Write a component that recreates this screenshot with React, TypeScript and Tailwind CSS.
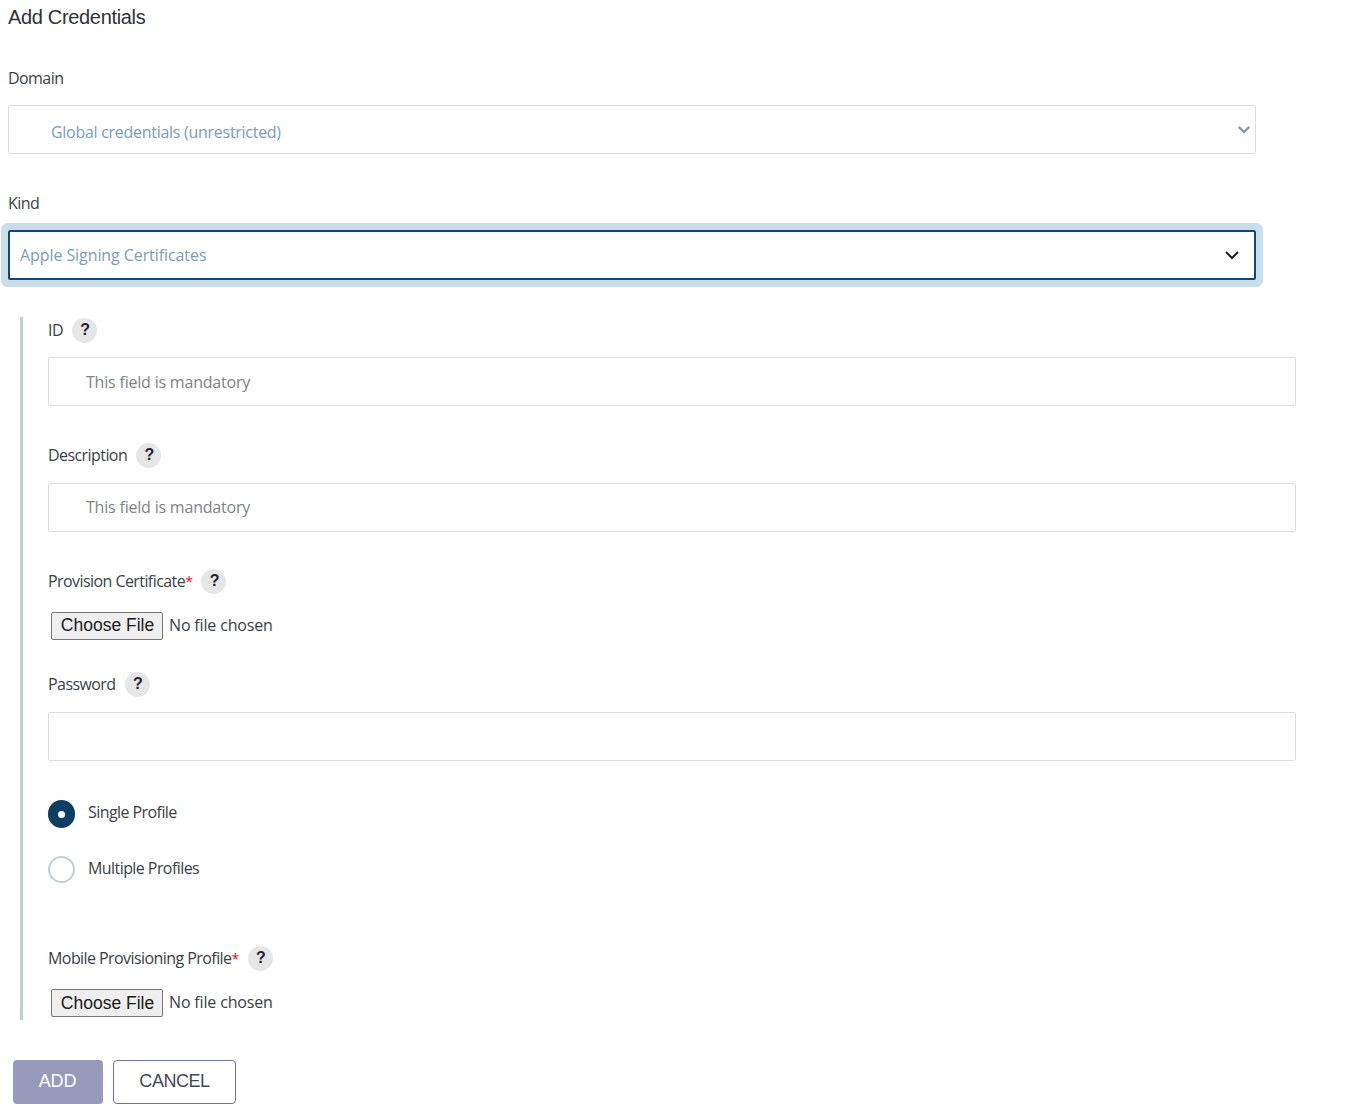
const sans = "font-['Open_Sans','Noto_Sans',sans-serif]";

function Help() {
  return (
    <span className="flex h-[25px] w-[25px] items-center justify-center rounded-full bg-[#e6e6e6] pl-px font-['Liberation_Sans',sans-serif] text-[16px] font-bold text-[#1f2430]">
      ?
    </span>
  );
}

function Label({ text, required }: { text: string; required?: boolean }) {
  return (
    <div className="flex h-[26px] items-center text-[16px] tracking-[-0.57px] text-[#3c4046]">
      <span>
        {text}
        {required && <span className="text-[14px] text-[#f01010]">*</span>}
      </span>
      <span className="ml-[9px]">
        <Help />
      </span>
    </div>
  );
}

function Field({ placeholder, lift }: { placeholder?: string; lift?: boolean }) {
  return (
    <div
      className={
        lift
          ? "flex h-[49px] w-[1248px] items-center rounded-[2px] border border-[#dedede] pb-[2px] pl-[37px] text-[16px] tracking-[-0.2px] text-[#808386]"
          : "flex h-[49px] w-[1248px] items-center rounded-[2px] border border-[#dedede] pl-[37px] text-[16px] tracking-[-0.2px] text-[#808386]"
      }
    >
      {placeholder}
    </div>
  );
}

function FileRow({ lift }: { lift?: boolean }) {
  return (
    <div className="flex items-center pl-[3px] font-['Liberation_Sans',sans-serif]">
      <span
        className={
          lift
            ? "flex h-[28px] w-[112px] items-center justify-center rounded-[2px] border border-[#767676] bg-[#efefef] pb-[2px] pl-px text-[17.5px] text-[#1a1a1a]"
            : "flex h-[28px] w-[112px] items-center justify-center rounded-[2px] border border-[#767676] bg-[#efefef] pl-px text-[17.5px] text-[#1a1a1a]"
        }
      >
        Choose File
      </span>
      <span className={`ml-[6px] ${sans} pb-[2px] text-[16px] tracking-[-0.16px] text-[#3c4046]`}>No file chosen</span>
    </div>
  );
}

function Chevron({ className, width }: { className: string; width: string }) {
  return (
    <svg viewBox="0 0 16 10" className={className} fill="none" stroke="currentColor" strokeWidth={width}>
      <path d="M2 2l6 6 6-6" />
    </svg>
  );
}

export default function App() {
  return (
    <div className={`min-h-[1115px] w-[1364px] bg-white pl-[8px] ${sans}`}>
      <div className="flex h-[34px] items-center font-['Liberation_Sans',sans-serif] text-[20px] tracking-[-0.33px] text-[#2f3338]">
        Add Credentials
      </div>

      <div className="mt-[32px] flex h-[24px] items-center text-[16px] tracking-[-0.57px] text-[#3c4046]">Domain</div>
      <div className="mt-[15px] flex h-[49px] w-[1248px] items-center justify-between rounded-[2px] border border-[#dedede] pl-[42px] pr-[4px] text-[16px] tracking-[-0.28px] text-[#7c9cb8]">
        <span className="pt-[5px]">Global credentials (unrestricted)</span>
        <Chevron className="h-[9px] w-[14px] text-[#7c9cb8]" width="2.6" />
      </div>

      <div className="mt-[37px] flex h-[24px] items-center text-[16px] tracking-[-0.57px] text-[#3c4046]">Kind</div>
      <div className="mt-[15px] flex h-[50px] w-[1248px] items-center justify-between rounded-[2px] border-2 border-[#0f4a6e] pl-[10px] pr-[14px] text-[16px] tracking-[-0.08px] text-[#7c9cb8] shadow-[0_0_0_7px_#c9deeb]">
        <span>Apple Signing Certificates</span>
        <Chevron className="h-[10px] w-[16px] text-[#14202c]" width="2" />
      </div>

      <div className="ml-[12px] mt-[37px] h-[703px] border-l-[3px] border-[#c2ced5] pl-[25px]">
        <Label text="ID" />
        <div className="mt-[14px]">
          <Field placeholder="This field is mandatory" />
        </div>

        <div className="mt-[36px]">
          <Label text="Description" />
        </div>
        <div className="mt-[15px]">
          <Field placeholder="This field is mandatory" lift />
        </div>

        <div className="mt-[36px]">
          <Label text="Provision Certificate" required />
        </div>
        <div className="mt-[18px]">
          <FileRow lift />
        </div>

        <div className="mt-[31px]">
          <Label text="Password" />
        </div>
        <div className="mt-[15px]">
          <Field />
        </div>

        <div className="mt-[39px] flex h-[28px] items-center">
          <span className="flex h-[28px] w-[27px] items-center justify-center rounded-full bg-[#0a3f63]">
            <span className="h-[7px] w-[7px] rounded-full bg-white" />
          </span>
          <span className="ml-[13px] -translate-y-[2px] text-[16px] tracking-[-0.57px] text-[#3c4046]">Single Profile</span>
        </div>
        <div className="mt-[28px] flex h-[27px] items-center">
          <span className="h-[27px] w-[27px] rounded-full border-2 border-[#c2ced5]" />
          <span className="ml-[13px] -translate-y-[2px] text-[16px] tracking-[-0.57px] text-[#3c4046]">Multiple Profiles</span>
        </div>

        <div className="mt-[62px]">
          <Label text="Mobile Provisioning Profile" required />
        </div>
        <div className="mt-[18px]">
          <FileRow />
        </div>
      </div>

      <div className="ml-[5px] mt-[40px] flex gap-[10px] font-['Liberation_Sans',sans-serif] text-[18px]">
        <span className="flex h-[44px] w-[90px] items-center justify-center rounded-[4px] bg-[#969bbc] pb-[2px] pr-[1px] tracking-[-0.1px] text-white">ADD</span>
        <span className="flex h-[44px] w-[123px] items-center justify-center rounded-[4px] border border-[#6a7199] pb-[2px] tracking-[-0.45px] text-[#3f4a55]">CANCEL</span>
      </div>
    </div>
  );
}
